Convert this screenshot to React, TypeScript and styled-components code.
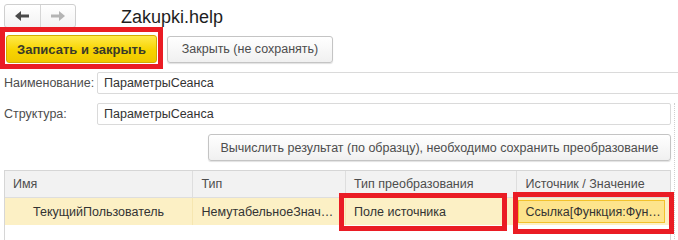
import styled, { createGlobalStyle } from "styled-components";

const GlobalStyle = createGlobalStyle`
  html, body {
    margin: 0;
    padding: 0;
    background: #ffffff;
    overflow: hidden;
  }
  body {
    font-family: "Liberation Sans", Arial, sans-serif;
    font-size: 12.5px;
    color: #333333;
  }
`;

const columns = [
  { title: "Имя", width: 189 },
  { title: "Тип", width: 153 },
  { title: "Тип преобразования", width: 172 },
  { title: "Источник / Значение", width: 153 },
];

const row = {
  name: "ТекущийПользователь",
  type: "НемутабельноеЗнач…",
  conversion: "Поле источника",
  source: "Ссылка[Функция:Фун…",
};

const ArrowLeft = ({ color }: { color: string }) => (
  <svg width="16" height="12" viewBox="0 0 16 12">
    <path d="M15 6H5" stroke={color} strokeWidth="3" />
    <path d="M1 6L7 1V11Z" fill={color} />
  </svg>
);

const ArrowRight = ({ color }: { color: string }) => (
  <svg width="16" height="12" viewBox="0 0 16 12">
    <path d="M1 6H11" stroke={color} strokeWidth="3" />
    <path d="M15 6L9 1V11Z" fill={color} />
  </svg>
);

export default function App() {
  return (
    <>
      <GlobalStyle />
      <Page>
        <TopBar>
          <NavGroup>
            <NavButton>
              <ArrowLeft color="#4a4a4a" />
            </NavButton>
            <NavButton $last>
              <ArrowRight color="#b4b4b4" />
            </NavButton>
          </NavGroup>
          <Title>Zakupki.help</Title>
        </TopBar>

        <CommandBar>
          <PrimaryButton>Записать и закрыть</PrimaryButton>
          <Button $width={166}>Закрыть (не сохранять)</Button>
        </CommandBar>

        <FieldRow>
          <Label>Наименование:</Label>
          <Input $bleed>ПараметрыСеанса</Input>
        </FieldRow>

        <Content>
          <FieldRow>
            <Label>Структура:</Label>
            <Input>ПараметрыСеанса</Input>
          </FieldRow>

          <ActionRow>
            <Button $width={463}>
              Вычислить результат (по образцу), необходимо сохранить преобразование
            </Button>
          </ActionRow>

          <Table>
            <HeaderRow>
              {columns.map((c) => (
                <HeaderCell key={c.title} style={{ width: c.width }}>
                  {c.title}
                </HeaderCell>
              ))}
            </HeaderRow>
            <DataRow>
              <Cell style={{ width: columns[0].width }} $indent={28}>
                {row.name}
              </Cell>
              <Cell style={{ width: columns[1].width }}>{row.type}</Cell>
              <Cell style={{ width: columns[2].width }}>{row.conversion}</Cell>
              <Cell style={{ width: columns[3].width }} $plain>
                <SelectedValue>{row.source}</SelectedValue>
              </Cell>
            </DataRow>
          </Table>
        </Content>

        <Highlight $x={0} $y={27} $w={163} $h={42} />
        <Highlight $x={339} $y={193} $w={168} $h={38} />
        <Highlight $x={513} $y={192} $w={161} $h={42} />
      </Page>
    </>
  );
}

const Page = styled.div`
  position: relative;
  width: 678px;
  height: 240px;
  overflow: hidden;
`;

const TopBar = styled.div`
  display: flex;
  align-items: center;
  height: 24px;
  padding: 4px 0 0 4px;
`;

const NavGroup = styled.div`
  display: flex;
  width: 72px;
  height: 24px;
  box-sizing: border-box;
  border: 1px solid #cfcfcf;
  border-radius: 3px;
  background: linear-gradient(#ffffff, #f3f3f3);
`;

const NavButton = styled.div<{ $last?: boolean }>`
  flex: 1;
  display: flex;
  align-items: center;
  justify-content: center;
  border-right: ${(p) => (p.$last ? "none" : "1px solid #d6d6d6")};
`;

const Title = styled.div`
  margin-left: 45px;
  margin-top: 2px;
  font-size: 18px;
  color: #1e1e1e;
`;

const CommandBar = styled.div`
  display: flex;
  align-items: center;
  gap: 10px;
  padding: 7px 0 0 6px;
`;

const BaseButton = styled.div`
  display: flex;
  align-items: center;
  justify-content: center;
  box-sizing: border-box;
  height: 27px;
  border-radius: 3px;
  white-space: nowrap;
`;

const PrimaryButton = styled(BaseButton)`
  width: 151px;
  height: 28px;
  font-size: 13px;
  font-weight: bold;
  color: #3a3a2a;
  border: 1px solid #d2ab00;
  background: linear-gradient(#ffe94a, #f7d400 55%, #efc800);
`;

const Button = styled(BaseButton)<{ $width: number }>`
  width: ${(p) => p.$width}px;
  color: #4d4d4d;
  border: 1px solid #c4c4c4;
  background: linear-gradient(#ffffff, #f0f0f0);
  box-shadow: 0 1px 1px rgba(0, 0, 0, 0.12);
`;

const FieldRow = styled.div`
  display: flex;
  align-items: center;
  margin-top: 9px;
  padding-left: 4px;
`;

const Label = styled.div`
  width: 93px;
  color: #4d4d4d;
  white-space: nowrap;
`;

const Input = styled.div<{ $bleed?: boolean }>`
  flex: 1;
  height: 22px;
  box-sizing: border-box;
  display: flex;
  align-items: center;
  padding-left: 6px;
  border: 1px solid #dadada;
  border-radius: 2px;
  color: #333333;
  margin-right: ${(p) => (p.$bleed ? "-20px" : "0")};
`;

const Content = styled.div`
  width: 671px;
  padding-right: 3px;
  border-right: 1px dotted #cfcfcf;
  padding-bottom: 20px;
`;

const ActionRow = styled.div`
  display: flex;
  justify-content: flex-end;
  margin-top: 9px;
`;

const Table = styled.div`
  margin: 9px 0 0 4px;
  border: 1px solid #d6d6d6;
  border-bottom: none;
  height: 80px;
`;

const HeaderRow = styled.div`
  display: flex;
  height: 26px;
  background: #f2f2f2;
  border-bottom: 1px solid #dedede;
`;

const HeaderCell = styled.div`
  box-sizing: border-box;
  display: flex;
  align-items: center;
  padding-left: 8px;
  color: #4d4d4d;
  border-right: 1px solid #dedede;
  &:last-child {
    border-right: none;
  }
`;

const DataRow = styled.div`
  display: flex;
  height: 27px;
  background: #fcf0c5;
`;

const Cell = styled.div<{ $indent?: number; $plain?: boolean }>`
  box-sizing: border-box;
  display: flex;
  align-items: center;
  padding-left: ${(p) => (p.$plain ? 1 : p.$indent ?? 8)}px;
  color: #333333;
  white-space: nowrap;
  overflow: hidden;
  border-right: 1px solid #f6e6b0;
  &:last-child {
    border-right: none;
  }
`;

const SelectedValue = styled.div`
  display: flex;
  align-items: center;
  box-sizing: border-box;
  width: 147px;
  height: 23px;
  padding-left: 6px;
  background: #fde48c;
  border: 1px solid #f2c22c;
  white-space: nowrap;
`;

const Highlight = styled.div<{ $x: number; $y: number; $w: number; $h: number }>`
  position: absolute;
  left: ${(p) => p.$x}px;
  top: ${(p) => p.$y}px;
  width: ${(p) => p.$w}px;
  height: ${(p) => p.$h}px;
  box-sizing: border-box;
  border: 5px solid #ea1c24;
  pointer-events: none;
`;
